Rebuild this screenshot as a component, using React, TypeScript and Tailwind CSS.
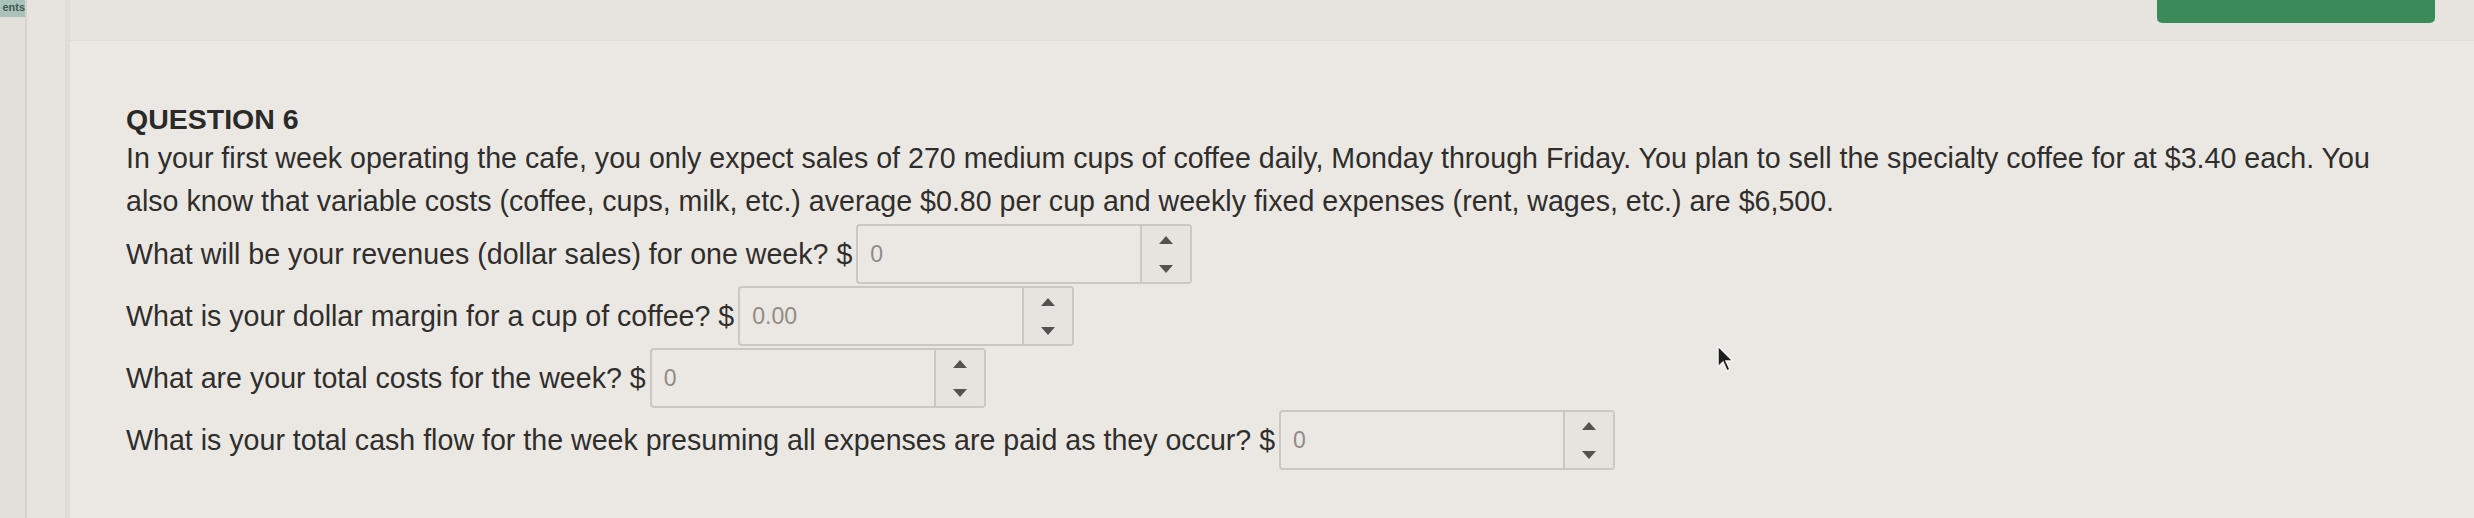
import React from "react";

type FieldProps = {
  label: string;
  value: string;
};

const Spinner = () => (
  <div className="flex w-[50px] flex-col items-center justify-center gap-[21px] border-l-2 border-[#cbc7c1] bg-[#e7e4df]">
    <svg width="14" height="8" viewBox="0 0 14 8">
      <path d="M7 0 L14 8 L0 8 Z" fill="#55534f" />
    </svg>
    <svg width="14" height="8" viewBox="0 0 14 8">
      <path d="M0 0 L14 0 L7 8 Z" fill="#55534f" />
    </svg>
  </div>
);

const QuestionField: React.FC<FieldProps> = ({ label, value }) => {
  return (
    <div className="flex h-[62px] items-center">
      <span>{label}</span>
      <div className="ml-[4px] flex h-[60px] w-[336px] rounded-[4px] border-2 border-[#cbc7c1] bg-[#ebe8e3]">
        <div className="flex flex-1 items-center pl-[12px] text-[23px] text-[#8f8c87]">
          {value}
        </div>
        <Spinner />
      </div>
    </div>
  );
};

export default function App() {
  return (
    <div className="relative flex h-[518px] w-[2474px] overflow-hidden bg-[#e6e3de] font-['Liberation_Sans',Arial,sans-serif] text-[#2f2e2c]">
      {/* left nav edge */}
      <div className="w-[27px] shrink-0 border-r-2 border-[#d6d3cd] bg-[#e3e0db]">
        <div className="h-[17px] overflow-hidden bg-[#a9c2ba] pt-[1px] text-right text-[11px] leading-[12px] font-bold text-[#3f5a55]">
          ents
        </div>
      </div>
      <div className="w-[43px] shrink-0 border-r-[5px] border-[#e0ddd7] bg-[#e7e4df]" />

      <div className="flex flex-1 flex-col">
        <div className="flex h-[40px] shrink-0 justify-end bg-[#e7e4df] pr-[39px]">
          <div className="h-[23px] w-[278px] rounded-b-[5px] bg-[#3a8a5a]" />
        </div>

        <div className="flex-1 border-t border-[#e0ddd7] bg-[#ebe8e3] pl-[56px] pt-[60px]">
          <h2 className="text-[28.5px] leading-[36px] font-bold text-[#2a2a29]">QUESTION 6</h2>
          <p className="max-w-[2280px] text-[28.6px] leading-[43px]">
            In your first week operating the cafe, you only expect sales of 270 medium cups of coffee daily, Monday
            through Friday. You plan to sell the specialty coffee for at $3.40 each. You also know that variable costs
            (coffee, cups, milk, etc.) average $0.80 per cup and weekly fixed expenses (rent, wages, etc.) are $6,500.
          </p>
          <div className="text-[28.6px]">
            <QuestionField label="What will be your revenues (dollar sales) for one week? $" value="0" />
            <QuestionField label="What is your dollar margin for a cup of coffee? $" value="0.00" />
            <QuestionField label="What are your total costs for the week? $" value="0" />
            <QuestionField
              label="What is your total cash flow for the week presuming all expenses are paid as they occur? $"
              value="0"
            />
          </div>
        </div>
      </div>

      {/* mouse pointer */}
      <svg className="absolute left-[1716px] top-[345px]" width="20" height="28" viewBox="0 0 20 28">
        <path d="M2 1 L2 22 L7 17 L11 26 L14 24.5 L10 16 L17 16 Z" fill="#1d1d1d" stroke="#f4f2ee" strokeWidth="1.5" />
      </svg>
    </div>
  );
}
